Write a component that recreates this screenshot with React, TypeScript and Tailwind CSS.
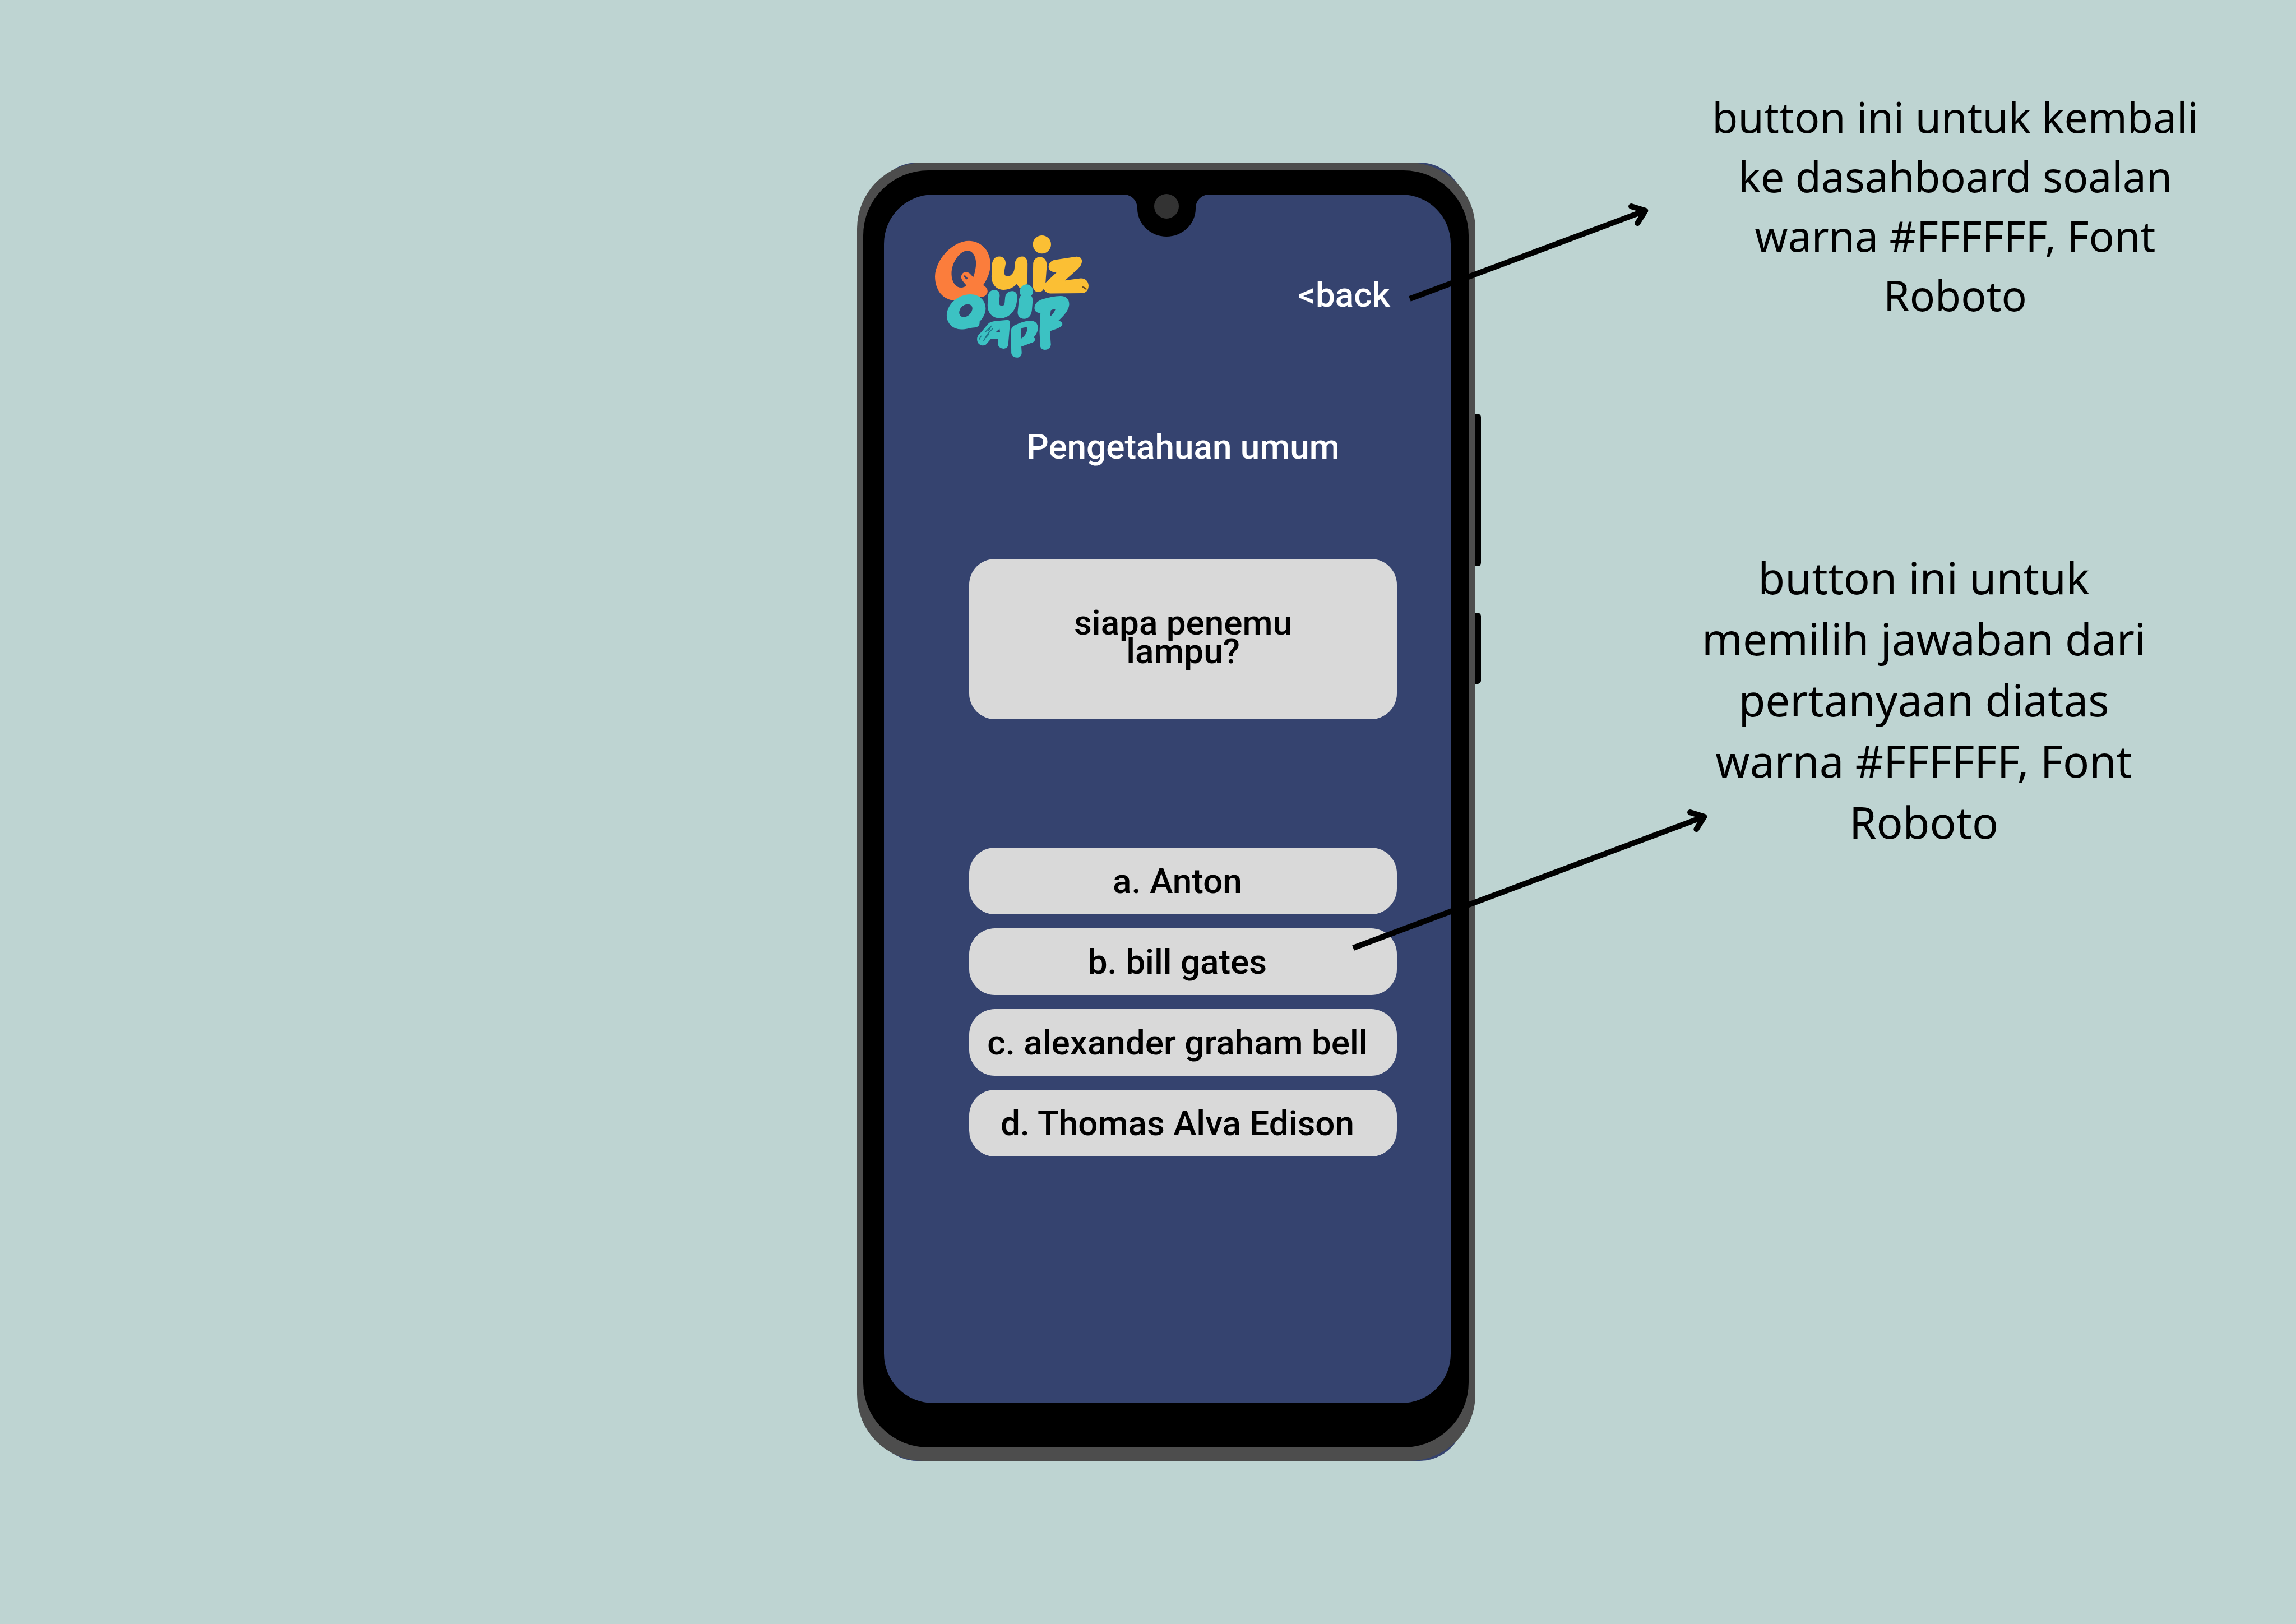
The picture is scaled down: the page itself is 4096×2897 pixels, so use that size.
import React from "react";

const answers = ["a. Anton", "b. bill gates", "c. alexander graham bell", "d. Thomas Alva Edison"];

function Logo() {
  return (
    <svg viewBox="130 100 1206 962" className="h-[219px] w-[274px] shrink-0" role="img" aria-label="Quiz Quip App">
      <g fill="#fb7d3c">
        <path
          fillRule="evenodd"
          d="M397 146C480 146 565 210 565 330C565 400 535 455 508 494C530 506 544 522 543 545C540 570 515 590 480 588L290 614C190 612 130 530 130 425C135 290 270 146 397 146ZM385 222C320 226 258 320 260 410C262 470 295 514 335 513C352 512 370 505 377 496C362 475 336 455 336 430C338 400 358 388 380 391C402 396 418 418 430 432C445 395 453 350 452 315C450 265 425 222 385 222Z"
        />
      </g>
      <path d="M364 424L378 440" stroke="#3b4370" strokeWidth="15" strokeLinecap="round" />
      <g fill="#fbbf34">
        <circle cx="970" cy="174" r="71" />
        <path d="M635 268C665 268 686 290 685 325L673 390C674 415 685 426 702 425C728 422 750 395 754 365L758 318C764 285 785 268 815 268C842 270 857 290 857 325L856 450C854 490 840 520 805 520C790 512 780 500 774 482C748 512 712 530 668 530C610 530 574 485 574 425L578 330C582 292 602 268 635 268Z" />
        <path d="M955 273C990 274 1008 300 1008 340L998 475L1086 392C1048 394 1023 378 1022 350C1024 318 1045 298 1080 294L1240 270C1268 269 1284 282 1284 308C1282 330 1270 348 1252 366L1150 457L1275 440C1312 440 1336 465 1336 500C1334 538 1312 556 1285 557L1040 559C1010 560 994 545 984 522C975 540 962 548 942 548C912 547 898 525 898 490L901 325C903 294 925 273 955 273Z" />
      </g>
      <path d="M1290 508C1300 508 1308 514 1316 526M1305 520L1316 516" fill="none" stroke="#6b4a1c" strokeWidth="9" strokeLinecap="round" />
      <g fill="#3cc2c3">
        <path
          fillRule="evenodd"
          d="M408 566C480 566 528 615 528 680C525 722 505 755 480 780C484 805 470 824 440 826C400 828 375 841 335 841C270 840 222 795 222 730C226 640 315 566 408 566ZM385 644C345 646 320 680 320 712C322 735 340 746 362 745C395 742 424 705 424 675C422 655 408 643 385 644Z"
        />
        <path d="M597 532C625 532 640 552 638 580L632 630C634 648 642 656 656 656C668 656 676 648 677 634L681 588C686 558 705 540 738 540C765 542 776 560 775 592C774 690 715 754 640 754C580 752 542 712 543 650L546 580C550 550 568 532 597 532Z" />
        <path d="M849 488C880 490 900 512 900 542C899 560 893 570 884 576C893 584 898 600 897 620L891 690C886 735 862 758 830 758C798 756 779 738 779 705L790 605C793 590 798 580 806 574C797 562 795 550 797 536C802 506 822 489 849 488Z" />
        <path
          fillRule="evenodd"
          d="M1115 579C1160 579 1184 605 1184 645C1180 695 1140 735 1100 772C1122 778 1132 790 1130 802C1125 820 1105 828 1085 836L1032 855L1040 960C1038 985 1020 1001 993 1001C968 1000 957 985 956 965L951 860L958 712C930 712 911 698 911 672C914 635 940 615 975 604C1020 590 1070 580 1115 579ZM1075 684C1060 682 1046 686 1039 692L1035 740C1052 725 1068 706 1075 684Z"
        />
        <path
          fillRule="evenodd"
          d="M700 767C715 768 720 778 719 795L705 960C702 982 690 992 668 992C640 990 624 975 624 950L626 917H568L535 955C525 966 512 969 497 966C472 960 458 940 461 910C465 885 480 875 495 860L545 800C560 785 575 780 595 777ZM637 836L608 862L641 864Z"
        />
        <path
          fillRule="evenodd"
          d="M880 772C920 774 940 795 938 835C936 862 922 885 903 905C918 910 918 918 914 928C905 945 885 947 870 953L808 976L811 1025C810 1048 795 1061 773 1062C745 1060 729 1045 729 1020L727 850C730 830 738 818 755 809C790 792 840 772 880 772ZM855 826C835 823 815 826 804 840L808 912C835 895 858 860 855 826Z"
        />
      </g>
      <path
        d="M572 815L524 862M583 835L540 880L512 932M566 830L548 852M492 893L478 918M552 880L530 905"
        fill="none"
        stroke="#1f7286"
        strokeWidth="7"
        strokeLinecap="round"
      />
    </svg>
  );
}

/* Pointer running from a control on the phone out to its note. */
function Arrow({ className, dx, dy }: { className: string; dx: number; dy: number }) {
  const angle = (Math.atan2(-dy, dx) * 180) / Math.PI;
  const len = Math.hypot(dx, dy);
  return (
    <svg className={className} viewBox={`0 0 ${dx} ${dy}`} width={dx} height={dy} aria-hidden="true">
      <g transform={`translate(0 ${dy}) rotate(${angle})`} stroke="#000" strokeWidth="10" fill="none">
        <path d={`M0 0H${len - 6}`} />
        <path d={`M${len - 26} -16L${len - 5} 0L${len - 26} 16`} strokeLinecap="round" strokeLinejoin="round" />
      </g>
    </svg>
  );
}

function Phone() {
  return (
    <div className="relative self-start">
      <div className="absolute inset-y-0 right-5 left-7 rounded-[80px] bg-[#35436f]" />
      <div className="relative rounded-[118px] bg-[#4d4d4d] pt-[14px] pr-[12px] pb-6 pl-[11px]">
        <div className="rounded-[116px] bg-black pt-[43px] pr-8 pb-[79px] pl-[37px]">
          <main className="min-h-[2156px] rounded-[88px] bg-[#35436f] pt-[72px] pr-[96px] pl-[91px]">
            <header className="flex items-start justify-between pr-3">
              <Logo />
              <button type="button" className="mt-[71px] text-[62px] leading-[72px] font-medium text-white">
                &lt;back
              </button>
            </header>
            <div className="ml-[61px]">
              <h1 className="mt-[123px] text-center text-[62px] leading-[72px] font-medium text-white">
                Pengetahuan umum
              </h1>
              <p className="mt-[164px] flex h-[286px] items-center justify-center rounded-[46px] bg-[#d9d9d9] px-40 pb-2 text-center text-[62px] leading-[51px] font-medium text-black">
                siapa penemu lampu?
              </p>
              <div className="mt-[229px] flex flex-col gap-[25px]">
                {answers.map((a) => (
                  <button
                    key={a}
                    type="button"
                    className="h-[119px] rounded-[46px] bg-[#d9d9d9] pr-5 text-center text-[62px] leading-[72px] font-medium whitespace-nowrap text-black"
                  >
                    {a}
                  </button>
                ))}
              </div>
            </div>
          </main>
        </div>
      </div>
      <svg viewBox="0 0 154 76" className="absolute top-[56px] left-1/2 h-[76px] w-[154px] -translate-x-1/2" aria-hidden="true">
        <path d="M0 0H154V1C139 1 129 12 129 26A52 50 0 0 1 25 26C25 12 15 1 0 1Z" />
        <circle cx="77" cy="22" r="22" fill="#333" />
      </svg>
      <span className="absolute top-[448px] left-full h-[272px] w-[10px] rounded-r-md bg-black" />
      <span className="absolute top-[803px] left-full h-[127px] w-[10px] rounded-r-md bg-black" />
      <Arrow className="absolute top-[84px] left-[986px] overflow-visible" dx={425} dy={159} />
      <Arrow className="absolute top-[1165px] left-[885px] overflow-visible" dx={631} dy={236} />
    </div>
  );
}

export default function App() {
  return (
    <div className="grid min-h-screen w-full grid-cols-[1529fr_1103fr_1464fr] bg-[#bed4d2] font-['Roboto',sans-serif]">
      <div />
      <div className="flex flex-col pt-[290px]">
        <Phone />
      </div>
      <aside className="flex flex-col gap-[397px] pt-[155px] text-center font-['Noto_Sans',sans-serif] text-black">
        <p className="ml-[406px] w-[900px] text-[75px] leading-[106px]">
          button ini untuk kembali ke dasahboard soalan warna #FFFFFF, Font Roboto
        </p>
        <p className="ml-[385px] w-[830px] text-[78px] leading-[109px]">
          button ini untuk memilih jawaban dari pertanyaan diatas warna #FFFFFF, Font Roboto
        </p>
      </aside>
    </div>
  );
}
